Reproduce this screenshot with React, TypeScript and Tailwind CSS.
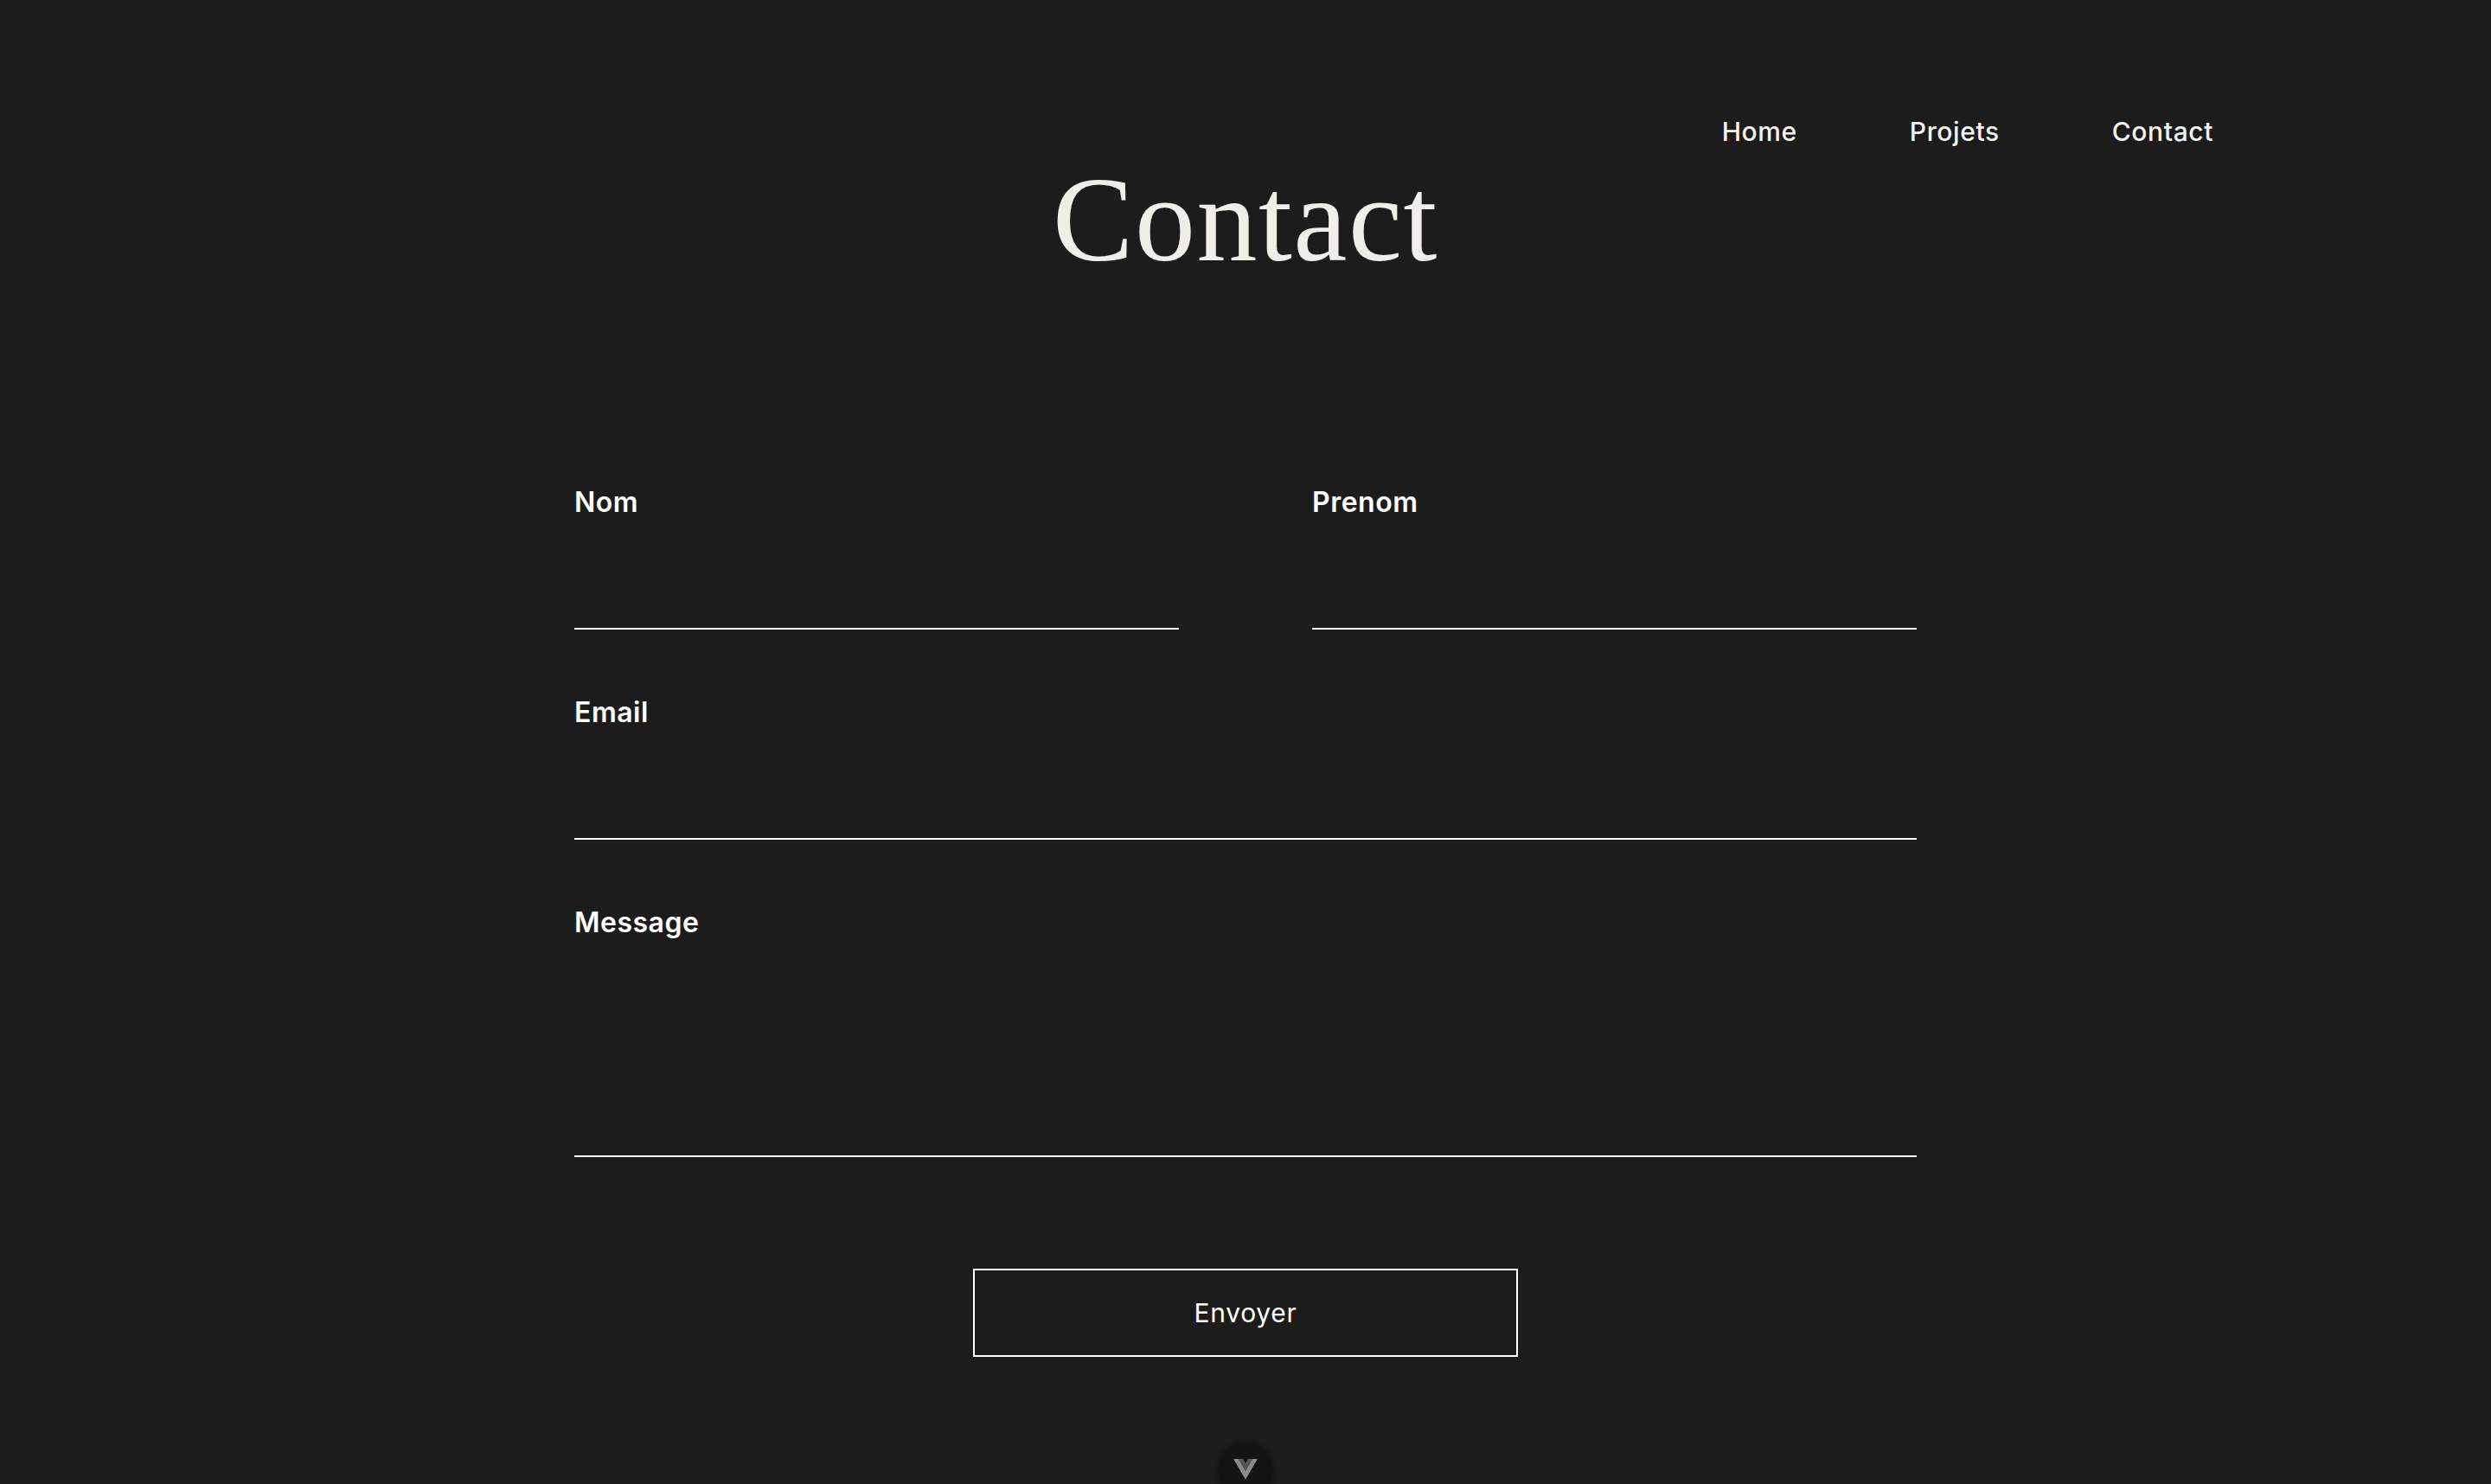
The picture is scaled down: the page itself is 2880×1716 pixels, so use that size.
import React from "react";

const Field = ({ label, h = "h-[101px]", className = "" }: { label: string; h?: string; className?: string }) => (
  <div className={`flex flex-col ${className}`}>
    <label className="text-[32px] leading-none font-semibold tracking-[0.5px] text-white">{label}</label>
    <div className={`mt-[30px] ${h} border-b-2 border-white`} />
  </div>
);

const App = () => {
  const nav = ["Home", "Projets", "Contact"];

  return (
    <div className="min-h-[1716px] bg-[#1c1c1c] font-['Inter','Liberation_Sans',sans-serif] text-white">
      {/* header */}
      <nav className="flex justify-end gap-[130px] pt-[137px] pr-[321px]">
        {nav.map((item, i) => (
          <a key={i} href="#" className="text-[30px] leading-none font-medium tracking-[0.6px] text-[#f4f3ef]">
            {item}
          </a>
        ))}
      </nav>

      {/* title */}
      <h1 className="mt-[17px] text-center font-['Liberation_Serif',serif] text-[140px] leading-none tracking-[1.5px] text-[#efeee9]">
        Contact
      </h1>

      {/* form */}
      <form className="mx-auto mt-[241px] w-[1552px]">
        <div className="grid grid-cols-2 gap-x-[154px]">
          <Field label="Nom" />
          <Field label="Prenom" />
        </div>
        <Field label="Email" className="mt-[80px]" />
        <Field label="Message" h="h-[225px]" className="mt-[80px]" />
        <div className="mt-[129px] flex justify-center">
          <button
            type="button"
            className="h-[102px] w-[630px] border-2 border-white text-[30px] leading-none tracking-[0.7px] text-white"
          >
            Envoyer
          </button>
        </div>
      </form>

      {/* floating badge */}
      <div className="fixed bottom-[-16px] left-1/2 flex h-[63px] w-[62px] -translate-x-1/2 items-start justify-center rounded-full bg-[#141414] pt-[18px] shadow-[0_0_6px_rgba(0,0,0,0.5)]">
        <svg width="28" height="24" viewBox="0 0 261.76 226.69">
          <path d="M161.096.001l-30.225 52.351L100.647.001H-.005l130.877 226.688L261.749.001z" fill="#8c8c8c" />
          <path d="M161.096.001l-30.225 52.351L100.647.001H52.346l78.526 136.01L209.398.001z" fill="#555555" />
        </svg>
      </div>
    </div>
  );
};

export default App;
